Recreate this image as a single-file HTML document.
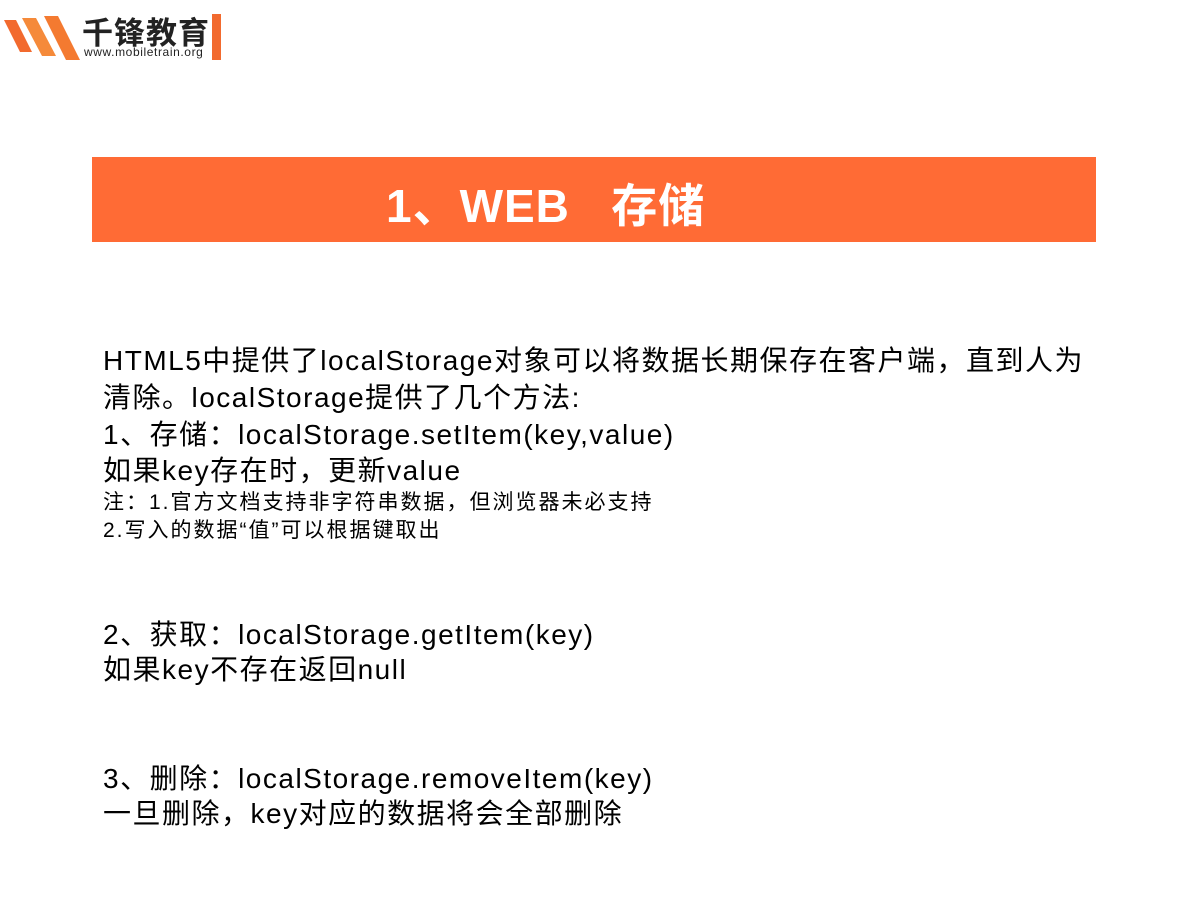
<!DOCTYPE html>
<html><head><meta charset="utf-8"><style>
body{margin:0;width:1200px;height:900px;background:#fff;position:relative;overflow:hidden;font-family:"Liberation Sans","Noto Sans CJK SC",sans-serif;color:#000}
.t{position:absolute;left:103px;white-space:nowrap}
.b{font-size:28px;letter-spacing:1.5px}
.s{font-size:21px;letter-spacing:2px}
</style></head><body>
<svg style="position:absolute;left:0;top:10px" width="82" height="55">
<polygon points="4,10 16,10 32,42 20,42" fill="#f26a2e"/>
<polygon points="22,8 36,8 56,46 42,46" fill="#f58a3a"/>
<polygon points="44,6 58,6 80,50 66,50" fill="#f47a30"/>
</svg>
<div style="position:absolute;left:82px;top:8px;font-size:31px;font-weight:bold;color:#222;letter-spacing:1px">千锋教育</div>
<div style="position:absolute;left:84px;top:45px;font-size:12px;color:#222;letter-spacing:0.6px">www.mobiletrain.org</div>
<div style="position:absolute;left:212px;top:14px;width:9px;height:46px;background:#f26a2e"></div>
<div style="position:absolute;left:92px;top:157px;width:1004px;height:85px;background:#ff6b35"></div>
<div style="position:absolute;left:386px;top:170px;font-size:46px;font-weight:bold;color:#fff;letter-spacing:1px">1、WEB&nbsp;&nbsp;&nbsp;存储</div>
<div class="t b" style="top:339px">HTML5中提供了localStorage对象可以将数据长期保存在客户端，直到人为</div>
<div class="t b" style="top:376px">清除。localStorage提供了几个方法:</div>
<div class="t b" style="top:413px">1、存储：localStorage.setItem(key,value)</div>
<div class="t b" style="top:449px">如果key存在时，更新value</div>
<div class="t s" style="top:486px">注：1.官方文档支持非字符串数据，但浏览器未必支持</div>
<div class="t s" style="top:514px">2.写入的数据“值”可以根据键取出</div>
<div class="t b" style="top:613px">2、获取：localStorage.getItem(key)</div>
<div class="t b" style="top:648px">如果key不存在返回null</div>
<div class="t b" style="top:757px">3、删除：localStorage.removeItem(key)</div>
<div class="t b" style="top:792px">一旦删除，key对应的数据将会全部删除</div>
</body></html>
